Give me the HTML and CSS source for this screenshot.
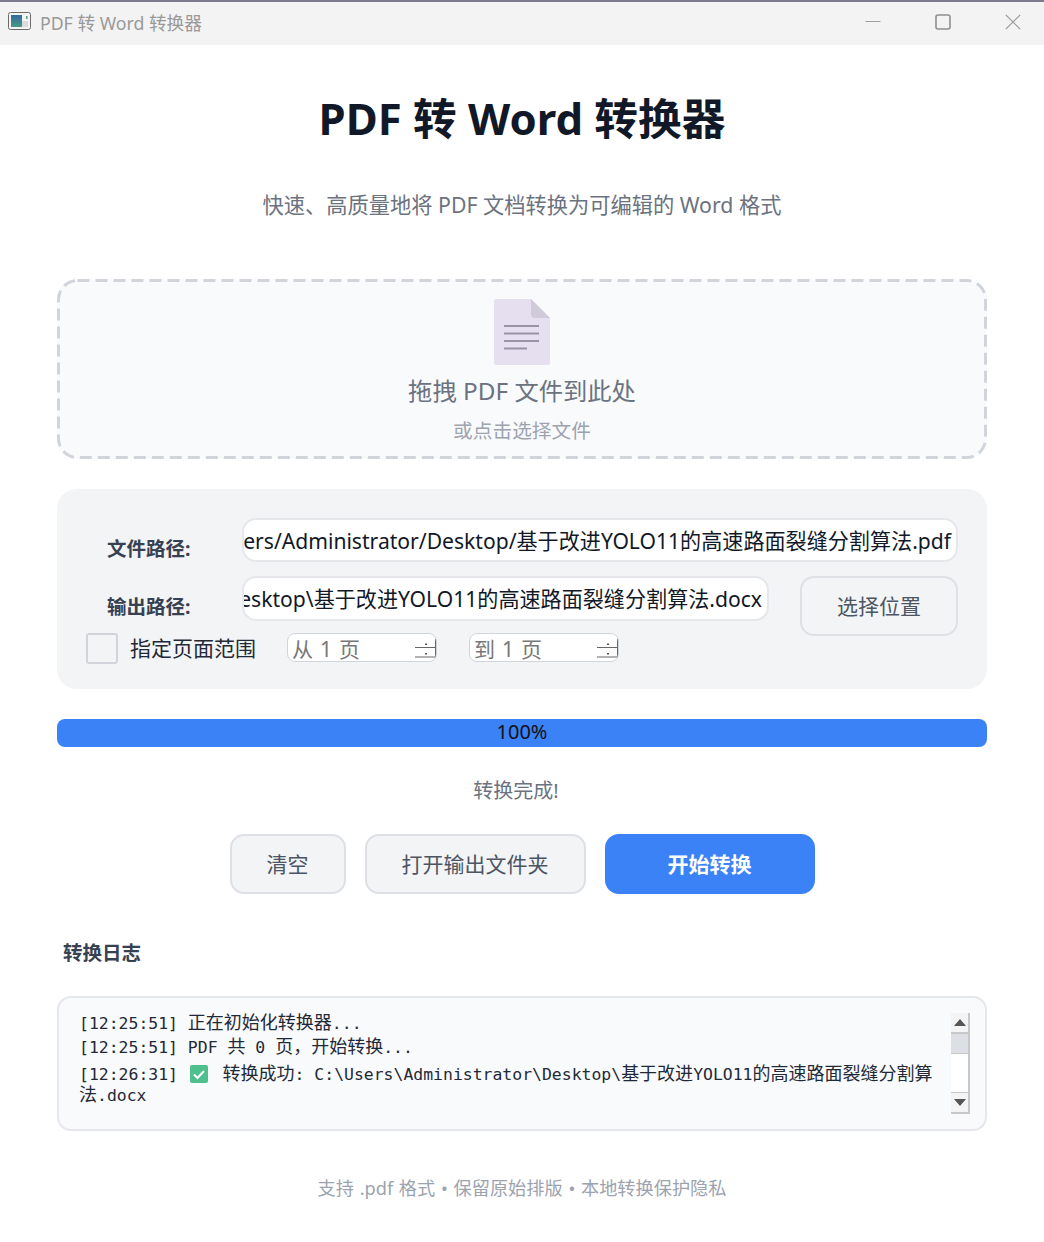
FILE: index.html
```html
<!DOCTYPE html>
<html lang="zh-CN">
<head>
    <meta charset="UTF-8">
    <meta name="viewport" content="width=device-width, initial-scale=1.0">
    <title>PDF 转 Word 转换器</title>
    <link rel="stylesheet" href="styles.css">
</head>
<body>
    <!-- Window title bar -->
    <div class="titlebar">
        <svg class="app-icon" width="24" height="20" viewBox="0 0 24 20">
            <defs>
                <linearGradient id="appFill" x1="0" y1="0" x2="0" y2="1">
                    <stop offset="0" stop-color="#33699e"/>
                    <stop offset="1" stop-color="#4a9a86"/>
                </linearGradient>
            </defs>
            <rect x="0.5" y="0.5" width="22" height="17" rx="2" fill="#f4f4f4" stroke="#6b6b6b"/>
            <rect x="3" y="3" width="11" height="12" fill="url(#appFill)"/>
            <rect x="14" y="9" width="6" height="6" fill="#dcdcdc"/>
            <rect x="18" y="4" width="1.5" height="3" fill="#5a9a80"/>
        </svg>
        <span class="app-title">PDF 转 Word 转换器</span>
        <div class="window-buttons">
            <svg width="16" height="16" viewBox="0 0 16 16"><path d="M0.5 7.5H15.5" stroke="#a0a0a0" stroke-width="1"/></svg>
            <svg width="16" height="16" viewBox="0 0 16 16"><rect x="1" y="1" width="14" height="14" rx="2" fill="none" stroke="#8f8f8f" stroke-width="1.6"/></svg>
            <svg width="16" height="16" viewBox="0 0 16 16"><path d="M0.8 0.8L15.2 15.2M15.2 0.8L0.8 15.2" stroke="#979797" stroke-width="1.2"/></svg>
        </div>
    </div>

    <div class="container">
        <h1>PDF 转 Word 转换器</h1>
        <p class="subtitle">快速、高质量地将 PDF 文档转换为可编辑的 Word 格式</p>

        <!-- Drop zone -->
        <div class="dropzone">
            <svg class="dash" width="930" height="180" viewBox="0 0 930 180">
                <rect x="1.500" y="1.500" width="927" height="177" rx="19" fill="none" stroke="#d1d5db" stroke-width="3" stroke-dasharray="12 6"/>
            </svg>
            <svg class="file-icon" width="56" height="66" viewBox="0 0 56 66">
                <path d="M2 0H37L56 19V64a2 2 0 0 1-2 2H2a2 2 0 0 1-2-2V2a2 2 0 0 1 2-2z" fill="#e6dff0"/>
                <path d="M37 0L56 19H41a4 4 0 0 1-4-4z" fill="#cfcbd8"/>
                <path d="M10 27H45M10 34.500H45M10 42H45M10 49.500H33" stroke="#9a93a6" stroke-width="2"/>
            </svg>
            <div class="drop-title">拖拽 PDF 文件到此处</div>
            <div class="drop-hint">或点击选择文件</div>
        </div>

        <!-- File settings -->
        <div class="panel">
            <div class="row">
                <label class="path-label">文件路径:</label>
                <div class="path-box path-full"><span>C:/Users/Administrator/Desktop/基于改进YOLO11的高速路面裂缝分割算法.pdf</span></div>
            </div>
            <div class="row row-output">
                <label class="path-label">输出路径:</label>
                <div class="path-box path-output"><span>C:\Users\Administrator\Desktop\基于改进YOLO11的高速路面裂缝分割算法.docx</span></div>
                <button class="btn btn-pick">选择位置</button>
            </div>
            <div class="row row-range">
                <span class="checkbox"></span>
                <span class="range-label">指定页面范围</span>
                <div class="spin">
                    <span>从 1 页</span>
                    <svg width="21" height="27" viewBox="0 0 21 27"><path d="M0 13.500H20M0 23H20M20.500 5V27" stroke="#666" stroke-width="1"/><rect x="10" y="9.500" width="2" height="1.500" fill="#555"/><rect x="10" y="19" width="2" height="1.500" fill="#555"/></svg>
                </div>
                <div class="spin">
                    <span>到 1 页</span>
                    <svg width="21" height="27" viewBox="0 0 21 27"><path d="M0 13.500H20M0 23H20M20.500 5V27" stroke="#666" stroke-width="1"/><rect x="10" y="9.500" width="2" height="1.500" fill="#555"/><rect x="10" y="19" width="2" height="1.500" fill="#555"/></svg>
                </div>
            </div>
        </div>

        <div class="progress">100%</div>
        <p class="status">转换完成!</p>

        <div class="actions">
            <button class="btn btn-clear">清空</button>
            <button class="btn btn-open">打开输出文件夹</button>
            <button class="btn btn-start">开始转换</button>
        </div>

        <h2>转换日志</h2>

        <!-- Log output -->
        <div class="log">
            <div class="log-text">
                <div class="log-line"><span class="mono">[12:25:51] </span>正在初始化转换器<span class="mono">...</span></div>
                <div class="log-line"><span class="mono">[12:25:51] PDF </span>共<span class="mono"> 0 </span>页，开始转换<span class="mono">...</span></div>
                <div class="log-line log-last"><span class="mono">[12:26:31] </span><svg class="check" width="18" height="18" viewBox="0 0 18 18"><rect width="18" height="18" rx="2" fill="#4fc08d"/><path d="M4 9.500L7.500 13L14 6" fill="none" stroke="#fff" stroke-width="2"/></svg> 转换成功<span class="mono">: C:\Users\Administrator\Desktop\</span>基于改进<span class="mono">YOLO11</span>的高速路面裂缝分割算法<span class="mono">.docx</span></div>
            </div>
            <div class="scrollbar">
                <div class="arrow"><svg width="12" height="7" viewBox="0 0 12 7"><path d="M6 0L12 7H0z" fill="#555"/></svg></div>
                <div class="thumb"></div>
                <div class="track"></div>
                <div class="arrow"><svg width="12" height="7" viewBox="0 0 12 7"><path d="M0 0H12L6 7z" fill="#555"/></svg></div>
            </div>
        </div>

        <p class="footer">支持 .pdf 格式 • 保留原始排版 • 本地转换保护隐私</p>
    </div>
</body>
</html>
```

FILE: styles.css
```css
* {
    box-sizing: border-box;
}
body {
    font-family: "Noto Sans", "Noto Sans CJK SC", sans-serif;
    background-color: #fff;
    margin: 0;
    padding: 0;
    height: 1242px;
    overflow: hidden;
}
.titlebar {
    height: 45px;
    background: #f3f3f3;
    border-top: 2px solid #7b7b8c;
    display: flex;
    align-items: center;
    padding: 0 0 4px 8px;
}
.app-icon {
    margin-right: 8px;
}
.app-title {
    font-size: 17.700px;
    color: #999;
}
.window-buttons {
    margin-left: auto;
    margin-right: 23px;
    display: flex;
    gap: 54px;
}
.container {
    padding: 0 57px;
}
h1 {
    margin: 45px 0 0;
    height: 56px;
    line-height: 56px;
    font-size: 43.700px;
    font-weight: 700;
    text-align: center;
    color: #111827;
}
.subtitle {
    margin: 43px 0 0;
    height: 32px;
    line-height: 32px;
    font-size: 21.250px;
    text-align: center;
    color: #6b7280;
}
.dropzone {
    position: relative;
    margin-top: 58px;
    height: 180px;
    border-radius: 20px;
    background: #f9fafb;
    display: flex;
    flex-direction: column;
    align-items: center;
    padding-top: 20px;
}
.dash {
    position: absolute;
    top: 0;
    left: 0;
}
.drop-title {
    margin-top: 8px;
    height: 36px;
    line-height: 36px;
    font-size: 24.300px;
    color: #6b7280;
}
.drop-hint {
    margin-top: 8px;
    height: 28px;
    line-height: 28px;
    font-size: 19.700px;
    color: #9ca3af;
}
.panel {
    margin-top: 30px;
    height: 200px;
    background: #f3f4f6;
    border-radius: 20px;
    padding: 29px 29px 0;
}
.row {
    display: flex;
    align-items: flex-start;
}
.row-output {
    margin-top: 14px;
}
.row-range {
    margin-top: -3px;
    align-items: center;
}
.path-label {
    width: 156px;
    height: 44px;
    padding-left: 21px;
    padding-top: 17px;
    font-size: 19.500px;
    line-height: 28px;
    font-weight: 700;
    color: #374151;
}
.path-box {
    height: 44px;
    background: #fff;
    border: 2px solid #e5e7eb;
    border-radius: 14px;
    display: flex;
    justify-content: flex-end;
    align-items: center;
    overflow: hidden;
    padding: 0 5px 2px 0;
    white-space: nowrap;
    font-size: 21.100px;
    color: #111827;
}
.path-full {
    width: 716px;
    padding-bottom: 0;
}
.path-output {
    width: 527px;
    height: 45px;
}
.path-box span {
    flex-shrink: 0;
}
.btn {
    font-family: inherit;
    font-size: 21px;
    color: #4b5563;
    background: #f3f4f6;
    border: 2px solid #dde1e6;
    border-radius: 14px;
    cursor: pointer;
    padding: 0 0 2px;
}
.btn-pick {
    width: 158px;
    height: 60px;
    margin-left: 31px;
}
.checkbox {
    width: 32px;
    height: 31px;
    background: #f3f4f6;
    border: 2px solid #d1d5db;
    border-radius: 3px;
}
.range-label {
    margin-left: 12px;
    width: 157px;
    padding-bottom: 1px;
    font-size: 21px;
    line-height: 24px;
    color: #1f2937;
}
.spin {
    width: 150px;
    height: 29px;
    margin-right: 32px;
    margin-bottom: 2px;
    background: #fff;
    border: 1px solid #d1d5db;
    border-radius: 8px;
    display: flex;
    align-items: center;
    justify-content: space-between;
    padding-left: 4px;
    font-size: 21px;
    line-height: 24px;
    word-spacing: 1.500px;
    color: #777;
    overflow: hidden;
}
.spin span {
    padding-top: 2px;
}
.spin svg {
    flex-shrink: 0;
}
.progress {
    margin-top: 30px;
    height: 28px;
    line-height: 26px;
    background: #3b82f6;
    border-radius: 8px;
    text-align: center;
    font-size: 20px;
    color: #111;
}
.status {
    margin: 30px 0 0;
    height: 28px;
    line-height: 28px;
    padding-right: 12px;
    font-size: 20px;
    text-align: center;
    color: #6b7280;
}
.actions {
    margin-top: 29px;
    display: flex;
    justify-content: center;
    gap: 19px;
}
.actions .btn {
    height: 60px;
    font-size: 21px;
}
.btn-clear {
    width: 116px;
}
.btn-open {
    width: 221px;
}
.actions .btn-start {
    width: 210px;
    background: #3b82f6;
    border-color: #3b82f6;
    color: #fff;
    font-weight: 700;
}
h2 {
    margin: 45px 0 0 6px;
    height: 28px;
    line-height: 28px;
    font-size: 19.500px;
    font-weight: 700;
    color: #374151;
}
.log {
    margin-top: 29px;
    height: 135px;
    background: #f9fafb;
    border: 2px solid #e5e7eb;
    border-radius: 14px;
    padding: 15px 15px 0 20px;
    display: flex;
    justify-content: space-between;
}
.log-text {
    width: 861px;
    margin-top: -3px;
    font-size: 18px;
    color: #1f2937;
    word-break: break-all;
}
.log-line {
    line-height: 24px;
}
.log-last {
    margin-top: 5px;
    line-height: 21px;
}
.mono {
    font-family: "DejaVu Sans Mono", monospace;
    font-size: 16.450px;
    line-height: 1;
}
.check {
    vertical-align: -3px;
    margin: 0 10px 0 2px;
}
.scrollbar {
    width: 19px;
    height: 101px;
    display: flex;
    flex-direction: column;
    border-right: 2px solid #c8c8c8;
    border-bottom: 2px solid #c8c8c8;
}
.arrow {
    height: 19px;
    display: flex;
    align-items: center;
    justify-content: center;
    background: #f4f4f4;
}
.thumb {
    height: 22px;
    background: #dcdfe3;
    border-top: 2px solid #c8c8c8;
    border-bottom: 1px solid #c8c8c8;
}
.track {
    flex: 1;
    background: #fff;
    border-bottom: 1px solid #c8c8c8;
}
.footer {
    margin: 43px 0 0;
    height: 28px;
    line-height: 28px;
    font-size: 18.200px;
    word-spacing: 1px;
    text-align: center;
    color: #9ca3af;
}
```
